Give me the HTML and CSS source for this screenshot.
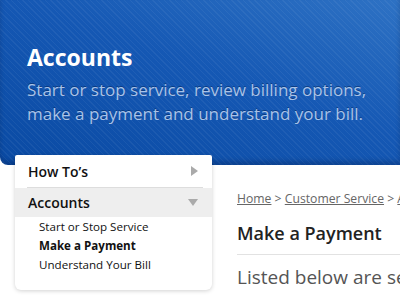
FILE: index.html
```html
<!DOCTYPE html>
<html lang="en">
<head>
  <meta charset="UTF-8">
  <title>Accounts - Customer Service</title>
  <link rel="stylesheet" href="styles.css">
</head>
<body>

  <header class="banner">
    <h1>Accounts</h1>
    <p>Start or stop service, review billing options,<br>make a payment and understand your bill.</p>
  </header>

  <div class="pagina">
    <nav class="menu">
      <div class="menu-item">
        <span>How To’s</span>
        <span class="seta-dir"></span>
      </div>
      <div class="menu-item aberto">
        <span>Accounts</span>
        <span class="seta-baixo"></span>
      </div>
      <ul class="submenu">
        <li><a href="#">Start or Stop Service</a></li>
        <li class="atual"><a href="#">Make a Payment</a></li>
        <li><a href="#">Understand Your Bill</a></li>
      </ul>
    </nav>

    <main class="conteudo">
      <div class="trilha">
        <a href="#">Home</a> &gt; <a href="#">Customer Service</a> &gt; <a href="#">Accounts</a>
      </div>
      <h2>Make a Payment</h2>
      <p class="intro">Listed below are several ways to make a payment.</p>
    </main>
  </div>

</body>
</html>
```

FILE: styles.css
```css
body {
  margin: 0;
  font-family: "Open Sans", "Noto Sans", sans-serif;
  background-color: #fff;
  overflow: hidden;
  width: 400px;
  height: 300px;
}

.banner {
  height: 165px;
  box-sizing: border-box;
  padding: 40px 0 0 27px;
  border-bottom-left-radius: 8px;
  background:
    repeating-linear-gradient(45deg, rgba(255,255,255,0.05) 0 1px, transparent 1px 4px),
    linear-gradient(20deg, #0a4aa3 0%, #1558b4 55%, #2e72c4 100%);
  box-shadow: inset 0 -4px 4px rgba(0,20,60,0.25);
  color: white;
}

.banner h1 {
  margin: 0;
  font-size: 23px;
  font-weight: 700;
  line-height: 34px;
}

.banner p {
  margin: 4px 0 0;
  font-size: 17px;
  line-height: 24px;
  color: #a9c3e8;
  text-shadow: 0 -1px 0 rgba(0,30,80,0.5);
}

.pagina {
  display: flex;
  gap: 25px;
}

.menu {
  flex: 0 0 197px;
  margin: -10px 0 0 15px;
  background: white;
  border-radius: 2px 2px 6px 6px;
  box-shadow: 0 1px 4px rgba(0,0,0,0.18);
  padding-bottom: 8px;
  position: relative;
}

.menu-item {
  display: flex;
  align-items: center;
  justify-content: space-between;
  height: 32px;
  padding: 0 14px 0 13px;
  font-size: 14px;
  font-weight: 600;
  color: #111;
}

.menu-item:first-child {
  margin: 0 9px 0 12px;
  padding: 0 5px 0 1px;
  border-bottom: 1px solid #ddd;
}

.menu-item.aberto {
  height: 29px;
  background-color: #eee;
}

.seta-dir {
  width: 0;
  height: 0;
  border-top: 5px solid transparent;
  border-bottom: 5px solid transparent;
  border-left: 7px solid #aaa;
}

.seta-baixo {
  width: 0;
  height: 0;
  border-left: 5px solid transparent;
  border-right: 5px solid transparent;
  border-top: 7px solid #aaa;
}

.submenu {
  list-style: none;
  margin: 0;
  padding: 0 0 0 24px;
  font-size: 11.6px;
  line-height: 19px;
}

.submenu a {
  color: #111;
  text-decoration: none;
}

.submenu .atual a {
  font-weight: 700;
}

.conteudo {
  flex: 0 0 300px;
  white-space: nowrap;
  padding-top: 25px;
}

.trilha {
  font-size: 12.2px;
  color: #666;
  line-height: 18px;
}

.trilha a {
  color: #666;
}

.conteudo h2 {
  margin: 12px 0 0;
  font-size: 18px;
  font-weight: 600;
  color: #222;
  line-height: 26px;
  padding-bottom: 8px;
  border-bottom: 1px solid #e2e2e2;
}

.intro {
  margin: 9px 0 0;
  font-size: 19px;
  color: #555;
}
```
